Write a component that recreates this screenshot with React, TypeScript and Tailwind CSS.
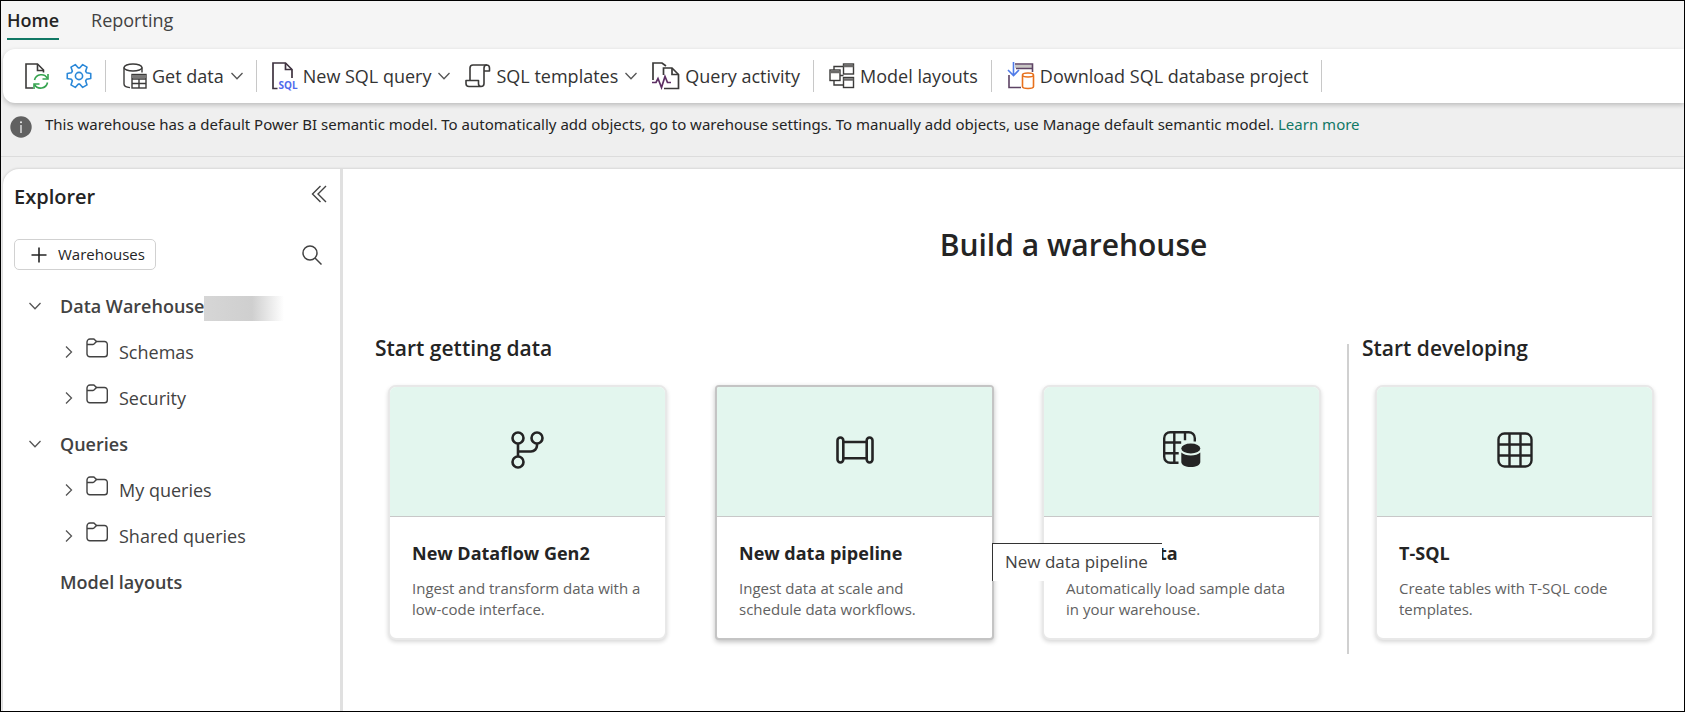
import type { ReactNode } from "react";

const ink = "#3b3a39";

function RefreshDocIcon() {
  return (
    <svg width="24" height="26" viewBox="0 0 24 26" fill="none" stroke={ink} strokeWidth="1.6" aria-hidden="true">
      <path d="M8 25H1V1h11.5l6 6v2.5" />
      <path d="M12.500 1v6.500h6" />
      <g stroke="#35a34f">
        <path d="M9.500 17a7 7 0 0 1 13-1.500" />
        <path d="M23 11v5h-5.500" />
        <path d="M22.500 19.500a7 7 0 0 1-13 2" />
        <path d="M9 26v-5h5.500" />
      </g>
    </svg>
  );
}

const gearPoints = [0, 60, 120, 180, 240, 300]
  .flatMap((a) => [
    [a - 24, 8.2],
    [a - 12, 12],
    [a + 12, 12],
    [a + 24, 8.2],
  ])
  .map(([a, r]) => {
    const t = (a * Math.PI) / 180;
    return `${(13 + r * Math.cos(t)).toFixed(2)},${(13 + r * Math.sin(t)).toFixed(2)}`;
  })
  .join(" ");

function GearIcon() {
  return (
    <svg width="26" height="26" viewBox="0 0 26 26" fill="none" stroke="#2b88d8" strokeWidth="1.6" strokeLinejoin="round" aria-hidden="true">
      <polygon points={gearPoints} />
      <circle cx="13" cy="13" r="3.600" />
    </svg>
  );
}

function GetDataIcon() {
  return (
    <svg width="26" height="26" viewBox="-2 0 26 26" fill="none" stroke={ink} strokeWidth="1.4" aria-hidden="true">
      <ellipse cx="10" cy="4.500" rx="9" ry="3.500" />
      <path d="M1 4.500V21c0 2 2 3.300 6 3.600M19 4.500v5" />
      <rect x="9" y="11.500" width="14" height="13.500" fill="#fff" />
      <path d="M9 13.500h14" strokeWidth="3" stroke="#7a7978" />
      <path d="M9 16h14M9 20.500h14M16 16v9" />
    </svg>
  );
}

function SqlDocIcon() {
  return (
    <svg width="26" height="28" viewBox="0 0 26 28" className="overflow-visible" fill="none" stroke="#3f3340" strokeWidth="1.7" aria-hidden="true">
      <path d="M5.500 26.500H1V1h12.500l6.500 6.500V16" />
      <path d="M13.500 1v6.500H20" />
      <text x="6.500" y="27" fontSize="10" fontWeight="700" fill="#4f6bed" stroke="none">SQL</text>
    </svg>
  );
}

function ScrollIcon() {
  return (
    <svg width="26" height="24" viewBox="0 0 26 24" fill="none" stroke={ink} strokeWidth="1.6" strokeLinejoin="round" aria-hidden="true">
      <path d="M5 16.500V4a3 3 0 0 1 3-3h13.500a3 3 0 0 1 3 3v3H19" />
      <path d="M22 1a3 3 0 0 0-3 3v15.500a3 3 0 0 1-3 3H4a3 3 0 0 1-3-3v-3h12.500v3a2.700 2.700 0 0 0 2.700 3" />
    </svg>
  );
}

function QueryActivityIcon() {
  return (
    <svg width="28" height="28" viewBox="0 0 28 28" fill="none" stroke={ink} strokeWidth="1.7" aria-hidden="true">
      <path d="M1 18V1h9l4 3" />
      <path d="M11.500 13V6H20l6.500 6.500V26.500H12" />
      <path d="M20 6v6.500h6.500" />
      <path d="M0 20.500h4l2-4 3.500 9 3.500-11 2.500 6h3.500" stroke="#5c2e63" />
    </svg>
  );
}

function ModelLayoutsIcon() {
  return (
    <svg width="26" height="26" viewBox="0 0 26 26" fill="none" stroke={ink} strokeWidth="1.4" aria-hidden="true">
      <path d="M5 7V3.500h9M5 18v4h9M11 12.500h3.500" />
      <rect x="1" y="7" width="10" height="10.500" fill="#fff" />
      <rect x="14.500" y="1" width="10" height="10" fill="#fff" />
      <rect x="14.500" y="14.500" width="10" height="10" fill="#fff" />
      <path d="M1 9h10M14.500 3h10M14.500 16.500h10" strokeWidth="2.500" stroke="#6b6a69" />
    </svg>
  );
}

function DownloadProjectIcon() {
  return (
    <svg width="28" height="28" viewBox="0 0 28 28" fill="none" strokeWidth="1.6" aria-hidden="true">
      <path d="M8 4.500h17" stroke="#c8c6c4" strokeWidth="3.500" />
      <path d="M8 2h17.500v8M9 6.500h16M2 13v12.500h12" stroke="#5d4364" />
      <path d="M6.500 0v13.500M1 8l5.500 5.500L12 8" stroke="#4f7be8" />
      <g stroke="#e8711c" fill="#fff">
        <path d="M15.500 13.500v11c0 1.300 2.500 2 5.500 2s5.500-.7 5.500-2v-11" />
        <ellipse cx="21" cy="13" rx="5.500" ry="2" />
      </g>
    </svg>
  );
}

function Chevron({ dir = "down" }: { dir?: "down" | "right" }) {
  return dir === "down" ? (
    <svg width="12" height="8" viewBox="0 0 12 8" fill="none" stroke="#555" strokeWidth="1.3" aria-hidden="true">
      <path d="M.5 1 6 6.800 11.500 1" />
    </svg>
  ) : (
    <svg width="8" height="12" viewBox="0 0 8 12" fill="none" stroke="#555" strokeWidth="1.3" aria-hidden="true">
      <path d="M1 .5 6.500 6 1 11.500" />
    </svg>
  );
}

function FolderIcon() {
  return (
    <svg width="22" height="20" viewBox="0 0 22 20" fill="none" stroke="#424242" strokeWidth="1.4" strokeLinejoin="round" aria-hidden="true">
      <path d="M1 4a3 3 0 0 1 3-3h3.500c1.200 0 2.200 2.500 3.500 2.500h7.500a2.800 2.800 0 0 1 2.800 2.800v9.700a2.800 2.800 0 0 1-2.800 2.800H3.800A2.800 2.800 0 0 1 1 16z" />
      <path d="M1 6.500h6c1.500 0 2.500-3 4-3" />
    </svg>
  );
}

function BranchIcon() {
  return (
    <svg width="34" height="38" viewBox="0 0 34 38" fill="none" stroke="#242424" strokeWidth="2.600" aria-hidden="true">
      <circle cx="7" cy="7" r="5.500" />
      <circle cx="26" cy="7" r="5.500" />
      <circle cx="7" cy="31" r="5.500" />
      <path d="M7 12.500v13M26 12.500v2a6 6 0 0 1-6 6H7" />
    </svg>
  );
}

function PipelineIcon() {
  return (
    <svg width="38" height="28" viewBox="0 0 38 28" fill="none" stroke="#242424" strokeWidth="2.600" aria-hidden="true">
      <rect x="1.500" y="1.500" width="5.800" height="25" rx="2.900" />
      <rect x="30.700" y="1.500" width="5.800" height="25" rx="2.900" />
      <path d="M7.500 6h23M7.500 22.300h23" />
    </svg>
  );
}

function SampleDataIcon() {
  return (
    <svg width="38" height="37" viewBox="0 0 38 37" fill="none" stroke="#242424" strokeWidth="2.400" aria-hidden="true">
      <path d="M15.500 31.800H7.200a6 6 0 0 1-6-6V7.200a6 6 0 0 1 6-6h18.600a6 6 0 0 1 6 6v3.300" />
      <path d="M11.300 1.200v30.600M22 1.200v8M1.200 11.500h17M1.200 22.300h14.500" />
      <g fill="#242424" stroke="none">
        <ellipse cx="27.800" cy="17.500" rx="9.500" ry="5" />
        <path d="M18.300 21.500c2 2 5.500 3 9.500 3s7.500-1 9.500-3v9.500c0 3-4.300 5-9.500 5s-9.500-2-9.500-5z" />
      </g>
    </svg>
  );
}

function GridIcon() {
  return (
    <svg width="36" height="36" viewBox="0 0 36 36" fill="none" stroke="#242424" strokeWidth="2.400" aria-hidden="true">
      <rect x="1.500" y="1.500" width="33" height="33" rx="6" />
      <path d="M12.500 1.500v33M23.500 1.500v33M1.500 12.500h33M1.500 23.500h33" />
    </svg>
  );
}

function Divider() {
  return <div className="h-8 w-px shrink-0 bg-[#c8c8c8]" />;
}

function ToolButton({ icon, label, menu }: { icon: ReactNode; label: string; menu?: boolean }) {
  return (
    <button type="button" className="flex shrink-0 items-center gap-[5px] pl-0.5 text-[18px] leading-6 whitespace-nowrap text-[#333]">
      {icon}
      <span>{label}</span>
      {menu && (
        <span className="ml-0.5">
          <Chevron />
        </span>
      )}
    </button>
  );
}

function TreeGroup({ label, blurred, open = true }: { label: string; blurred?: boolean; open?: boolean }) {
  return (
    <button type="button" className="flex h-[46px] w-full items-center pl-[26px] text-left text-[18px] font-semibold text-[#424242]">
      <span className="w-[31px] shrink-0">{open && <Chevron />}</span>
      <span className="whitespace-nowrap">{label}</span>
      {blurred && <span className="mt-1 h-[25px] w-20 bg-linear-to-r from-[#d6d6d6] via-[#cfcfcf] via-60% to-white" />}
    </button>
  );
}

function TreeFolder({ label }: { label: string }) {
  return (
    <button type="button" className="flex h-[46px] w-full items-center pl-[62px] text-left text-[18px] text-[#424242]">
      <span className="w-[21px] shrink-0">
        <Chevron dir="right" />
      </span>
      <span className="mb-2 w-[33px] shrink-0">
        <FolderIcon />
      </span>
      <span className="whitespace-nowrap">{label}</span>
    </button>
  );
}

function Card({ icon, title, text, active, tip }: { icon: ReactNode; title: string; text: string; active?: boolean; tip?: string }) {
  return (
    <div className="relative w-[279px] shrink-0">
      <button
        type="button"
        className={
          active
            ? "flex w-full flex-col overflow-hidden rounded-[4px] border-2 border-[#c4c4c4] bg-white text-left shadow-[0_2px_5px_rgba(0,0,0,0.25)]"
            : "flex w-full flex-col overflow-hidden rounded-[8px] border-2 border-[#e8e8e8] bg-white text-left shadow-[0_2px_4px_rgba(0,0,0,0.16)]"
        }
      >
        <span className="flex h-[130px] w-full items-center justify-center border-b border-[#c8c8c8] bg-[#e3f6ee] pb-1">{icon}</span>
        <span className={active ? "flex h-[121px] flex-col gap-[13px] pt-6 pr-10 pl-[22px]" : "flex h-[121px] flex-col gap-[13px] px-[22px] pt-6"}>
          <span className="text-[18px] leading-6 font-bold text-[#242424]">{title}</span>
          <span className="text-[15px] leading-[21px] text-[#616161]">{text}</span>
        </span>
      </button>
      {tip && (
        <div role="tooltip" className="absolute top-[158px] left-[277px] z-10 h-[38px] border-t border-l border-[#333] bg-white pr-3.5 pl-3 text-[17px] leading-9 whitespace-nowrap text-[#424242]">
          {tip}
        </div>
      )}
    </div>
  );
}

export default function App() {
  return (
    <div className="flex min-h-screen flex-col overflow-hidden border border-black bg-[#efefef] font-['Open_Sans','Noto_Sans',sans-serif] text-[#242424]">
      <header className="bg-[#f5f5f5]">
        <nav className="flex h-12 gap-8 px-1.5 pt-[5px] text-[18px] leading-7">
          <a href="#home" aria-current="page" className="h-[34px] border-b-2 border-[#117865] font-semibold">
            Home
          </a>
          <a href="#reporting" className="h-[34px] text-[#424242]">
            Reporting
          </a>
        </nav>
      </header>

      <div className="bg-linear-to-b from-[#f5f5f5] to-[#efefef] pl-0.5">
        <div role="toolbar" aria-label="Warehouse" className="flex h-[54px] items-center gap-[13px] rounded-l-xl bg-white pl-[22px] shadow-[0_2px_5px_rgba(0,0,0,0.22)]">
          <button type="button" aria-label="Refresh" className="mr-1">
            <RefreshDocIcon />
          </button>
          <button type="button" aria-label="Settings">
            <GearIcon />
          </button>
          <Divider />
          <ToolButton icon={<GetDataIcon />} label="Get data" menu />
          <Divider />
          <ToolButton icon={<SqlDocIcon />} label="New SQL query" menu />
          <ToolButton icon={<ScrollIcon />} label="SQL templates" menu />
          <ToolButton icon={<QueryActivityIcon />} label="Query activity" />
          <Divider />
          <ToolButton icon={<ModelLayoutsIcon />} label="Model layouts" />
          <Divider />
          <ToolButton icon={<DownloadProjectIcon />} label="Download SQL database project" />
          <Divider />
        </div>
      </div>

      <div className="flex h-[54px] items-start gap-[13px] border-b border-[#dcdcdc] pt-[11px] pl-[9px] text-[15px] leading-5">
        <svg width="22" height="22" viewBox="0 0 22 22" className="mt-0.5 shrink-0" aria-hidden="true">
          <circle cx="11" cy="11" r="10.700" fill="#616161" />
          <path d="M11 9v8" stroke="#efefef" strokeWidth="1.300" />
          <circle cx="11" cy="6.300" r="1" fill="#efefef" />
        </svg>
        <p className="font-['Noto_Sans','Open_Sans',sans-serif] whitespace-nowrap">
          This warehouse has a default Power BI semantic model. To automatically add objects, go to warehouse settings. To manually add objects, use Manage default semantic model.{" "}
          <a href="#learn" className="text-[#117865]">
            Learn more
          </a>
        </p>
      </div>

      <div className="mt-3 ml-0.5 flex flex-1 overflow-hidden rounded-tl-2xl bg-white shadow-[0_0_3px_rgba(0,0,0,0.2)]">
        <aside className="w-[340px] shrink-0 border-r-3 border-[#e0e0e0]">
          <div className="flex items-center justify-between pt-3 pr-[13px] pl-[11px]">
            <h2 className="text-[20px] leading-8 font-semibold">Explorer</h2>
            <button type="button" aria-label="Collapse explorer" className="mb-1.5">
              <svg width="16" height="18" viewBox="0 0 16 18" fill="none" stroke="#424242" strokeWidth="1.400" aria-hidden="true">
                <path d="M9.500 1 1.500 9l8 8M15 1 7 9l8 8" />
              </svg>
            </button>
          </div>
          <div className="mt-[26px] mb-[13px] flex items-center justify-between pr-[18px] pl-[11px]">
            <button type="button" className="flex h-[31px] w-[142px] items-center gap-[11px] rounded-[5px] border border-[#d1d1d1] pl-4 text-[15px]">
              <svg width="16" height="16" viewBox="0 0 16 16" stroke="#242424" strokeWidth="1.600" aria-hidden="true">
                <path d="M8 .5v15M.5 8h15" />
              </svg>
              Warehouses
            </button>
            <button type="button" aria-label="Search">
              <svg width="20" height="20" viewBox="0 0 20 20" fill="none" stroke="#424242" strokeWidth="1.500" aria-hidden="true">
                <circle cx="8" cy="8" r="7" />
                <path d="m13 13 6.500 6.500" />
              </svg>
            </button>
          </div>
          <TreeGroup label="Data Warehouse" blurred />
          <TreeFolder label="Schemas" />
          <TreeFolder label="Security" />
          <TreeGroup label="Queries" />
          <TreeFolder label="My queries" />
          <TreeFolder label="Shared queries" />
          <TreeGroup label="Model layouts" open={false} />
        </aside>

        <main className="min-w-0 flex-1">
          <h1 className="pt-14 pl-[120px] text-center text-[30px] leading-10 font-semibold">Build a warehouse</h1>
          <div className="mt-[67px] flex pl-8">
            <section>
              <h2 className="text-[21px] leading-8 font-semibold">Start getting data</h2>
              <div className="mt-[21px] flex gap-12 pl-[13px]">
                <Card icon={<BranchIcon />} title="New Dataflow Gen2" text="Ingest and transform data with a low-code interface." />
                <Card icon={<PipelineIcon />} title="New data pipeline" text="Ingest data at scale and schedule data workflows." active tip="New data pipeline" />
                <Card icon={<SampleDataIcon />} title="Sample data" text="Automatically load sample data in your warehouse." />
              </div>
            </section>
            <div className="mt-3 ml-[26px] w-0.5 bg-[#d0d0d0]" />
            <section className="pb-3.5 pl-[13px]">
              <h2 className="text-[21px] leading-8 font-semibold">Start developing</h2>
              <div className="mt-[21px] pl-[13px]">
                <Card icon={<GridIcon />} title="T-SQL" text="Create tables with T-SQL code templates." />
              </div>
            </section>
          </div>
        </main>
      </div>
    </div>
  );
}
